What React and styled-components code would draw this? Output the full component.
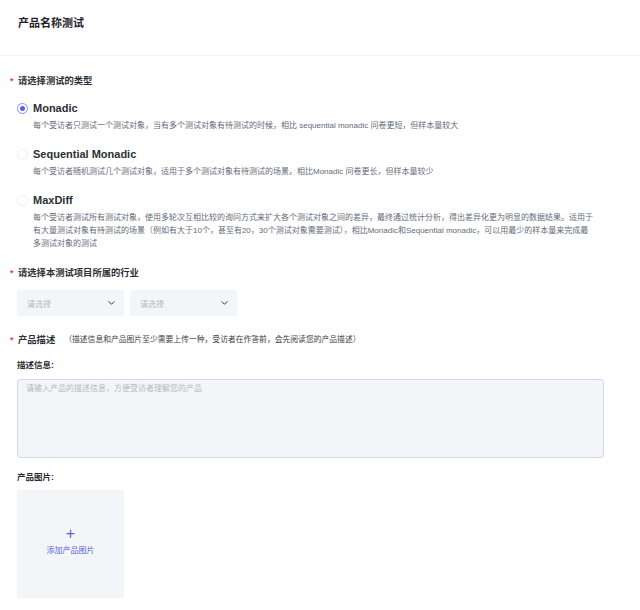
import React from "react";
import styled, { createGlobalStyle } from "styled-components";

const Global = createGlobalStyle`
  body {
    margin: 0;
    background: #fff;
    font-family: "Liberation Sans", "Noto Sans CJK SC", sans-serif;
    color: #1f2329;
  }
`;

const Page = styled.div`
  width: 640px;
`;

const Header = styled.div`
  height: 56px;
  box-sizing: border-box;
  padding: 16px 0 0 18px;
  border-bottom: 1px solid #f2f2f4;
  h1 {
    margin: 0;
    font-size: 11px;
    line-height: 14px;
    font-weight: 700;
    color: #1f2329;
  }
`;

const Body = styled.div`
  padding: 0 0 0 10px;
`;

const SectionLabel = styled.div`
  display: flex;
  align-items: center;
  margin-top: ${(p) => p.$top}px;
  font-size: 9.3px;
  line-height: 14px;
  font-weight: 700;
  color: #2b2f36;
  &::before {
    content: "*";
    color: #e5484d;
    width: 8px;
    font-size: 9px;
    font-weight: 700;
  }
  small {
    margin-left: 9px;
    font-size: 7.8px;
    font-weight: 400;
    color: #3a3d44;
  }
`;

const Options = styled.div`
  display: flex;
  flex-direction: column;
  gap: 14px;
  margin-top: 12px;
  padding-left: 7px;
`;

const Option = styled.div`
  display: grid;
  grid-template-columns: 11px 1fr;
  column-gap: 5px;
  align-items: center;
`;

const Radio = styled.span`
  width: 11px;
  height: 11px;
  box-sizing: border-box;
  border-radius: 50%;
  border: 1px solid ${(p) => (p.$checked ? "#8b8ff0" : "#eceef2")};
  display: flex;
  align-items: center;
  justify-content: center;
  &::after {
    content: "";
    width: 5px;
    height: 5px;
    border-radius: 50%;
    background: ${(p) => (p.$checked ? "#5b5fe0" : "transparent")};
  }
`;

const OptionTitle = styled.div`
  font-size: 11px;
  line-height: 16px;
  font-weight: 700;
  color: #2b2f36;
`;

const OptionDesc = styled.div`
  grid-column: 2;
  margin-top: 3px;
  font-size: 8px;
  line-height: 13px;
  color: #646a78;
  max-width: 562px;
`;

const Selects = styled.div`
  display: flex;
  gap: 6px;
  margin-top: 10px;
  padding-left: 7px;
`;

const Select = styled.div`
  width: 107px;
  height: 26px;
  box-sizing: border-box;
  background: #f4f5f8;
  border-radius: 2px;
  display: flex;
  align-items: center;
  justify-content: space-between;
  padding: 0 9px 0 10px;
  font-size: 8px;
  color: #b4b8c0;
`;

const FieldLabel = styled.div`
  margin-top: ${(p) => p.$top}px;
  padding-left: 7px;
  font-size: 8.5px;
  line-height: 12px;
  font-weight: 700;
  color: #2b2f36;
`;

const TextArea = styled.div`
  margin: 8px 0 0 7px;
  width: 587px;
  height: 79px;
  box-sizing: border-box;
  background: #f4f5f8;
  border: 1px solid #d4d6ec;
  border-radius: 3px;
  padding: 3px 8px;
  font-size: 8px;
  line-height: 12px;
  color: #b4b8c0;
`;

const Upload = styled.div`
  margin: 7px 0 13px 7px;
  width: 107px;
  height: 108px;
  box-sizing: border-box;
  padding-bottom: 7px;
  background: #f4f5f8;
  display: flex;
  flex-direction: column;
  align-items: center;
  justify-content: center;
  color: #5b5fe0;
  font-size: 8px;
  span {
    font-size: 16px;
    line-height: 14px;
    font-weight: 400;
    margin-bottom: 3px;
  }
`;

const Chevron = () => (
  <svg width="7" height="4" viewBox="0 0 7 4" fill="none">
    <path d="M0.8 0.6l2.7 2.7 2.7-2.7" stroke="#3a3e47" strokeWidth="1" strokeLinecap="round" strokeLinejoin="round" />
  </svg>
);

const options = [
  {
    title: "Monadic",
    checked: true,
    desc: "每个受访者只测试一个测试对象，当有多个测试对象有待测试的时候，相比 sequential monadic 问卷更短，但样本量较大",
  },
  {
    title: "Sequential Monadic",
    desc: "每个受访者随机测试几个测试对象，适用于多个测试对象有待测试的场景。相比Monadic 问卷更长，但样本量较少",
  },
  {
    title: "MaxDiff",
    desc: "每个受访者测试所有测试对象，使用多轮次互相比较的询问方式来扩大各个测试对象之间的差异，最终通过统计分析，得出差异化更为明显的数据结果。适用于有大量测试对象有待测试的场景（例如有大于10个，甚至有20，30个测试对象需要测试），相比Monadic和Sequential monadic，可以用最少的样本量来完成最多测试对象的测试",
  },
];

export default function App() {
  return (
    <Page>
      <Global />
      <Header>
        <h1>产品名称测试</h1>
      </Header>
      <Body>
        <SectionLabel $top={18}>请选择测试的类型</SectionLabel>
        <Options>
          {options.map((o) => (
            <Option key={o.title}>
              <Radio $checked={o.checked} />
              <OptionTitle>{o.title}</OptionTitle>
              <OptionDesc>{o.desc}</OptionDesc>
            </Option>
          ))}
        </Options>
        <SectionLabel $top={16}>请选择本测试项目所属的行业</SectionLabel>
        <Selects>
          <Select>
            请选择 <Chevron />
          </Select>
          <Select>
            请选择 <Chevron />
          </Select>
        </Selects>
        <SectionLabel $top={17}>
          产品描述
          <small>（描述信息和产品图片至少需要上传一种，受访者在作答前，会先阅读您的产品描述）</small>
        </SectionLabel>
        <FieldLabel $top={12}>描述信息:</FieldLabel>
        <TextArea>请输入产品的描述信息，方便受访者理解您的产品</TextArea>
        <FieldLabel $top={13}>产品图片:</FieldLabel>
        <Upload>
          <span>+</span>
          添加产品图片
        </Upload>
      </Body>
    </Page>
  );
}
